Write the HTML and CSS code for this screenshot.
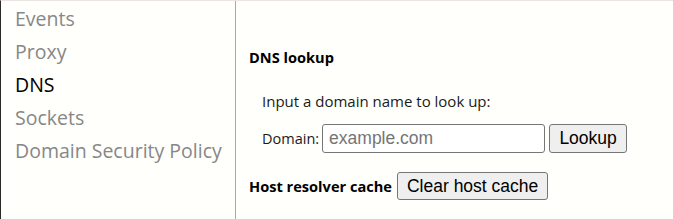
FILE: index.html
```html
<!DOCTYPE html>
<html>
<head>
<meta http-equiv="Content-Type" content="text/html; charset=utf-8" />
<title>net-internals</title>
<link rel="stylesheet" href="styles.css">
</head>
<body>

<div class="page">

	<ul class="tabs">
		<li>Events</li>
		<li>Proxy</li>
		<li class="selected">DNS</li>
		<li>Sockets</li>
		<li>Domain Security Policy</li>
	</ul>

	<div class="content">
		<h4>DNS lookup</h4>

		<div class="indent">
			<p>Input a domain name to look up:</p>

			<form class="lookup" onsubmit="return false">
				<label for="dnsName">Domain:</label>
				<input type="text" id="dnsName" placeholder="example.com" />
				<button type="submit">Lookup</button>
			</form>
		</div>

		<div class="cache">
			<h4>Host resolver cache</h4>
			<button type="button">Clear host cache</button>
		</div>
	</div>

</div>

</body>
</html>
```

FILE: styles.css
```css
html, body {
	margin: 0;
	height: 100%;
	background: #fffffb;
}

.page {
	display: flex;
	height: 100%;
	box-sizing: border-box;
	border-top: 1px solid #ebe4e2;
	border-left: 1px solid #2a2a2a;
	font-family: "Open Sans", "Liberation Sans", sans-serif;
}

.tabs {
	width: 235px;
	flex: none;
	margin: 0;
	padding: 1px 0 0 14px;
	box-sizing: border-box;
	list-style: none;
	border-right: 1px solid #a9a9a9;
}

.tabs li {
	font-size: 19.5px;
	line-height: 33px;
	color: #878787;
	white-space: nowrap;
}

.tabs li.selected {
	color: #000;
}

.content {
	padding: 46px 0 0 13px;
	font-size: 15px;
	color: #1a1a1a;
}

h4 {
	margin: 0;
	font-size: 14.6px;
	line-height: 20px;
	font-weight: bold;
	color: #000;
	white-space: nowrap;
}

.indent {
	padding-left: 13px;
}

.indent p {
	margin: 24px 0 13px 0;
	line-height: 20px;
}

.lookup {
	display: flex;
	align-items: center;
	gap: 3px;
	margin: 0;
}

.lookup label {
	font-size: 14.5px;
	margin-right: 0;
}

input[type=text] {
	width: 223px;
	height: 29px;
	box-sizing: border-box;
	border: 1px solid #767676;
	border-radius: 3px;
	padding: 0 6px;
	font-family: "Liberation Sans", Arial, sans-serif;
	font-size: 17.5px;
	background: #fff;
}

input[type=text]::placeholder {
	color: #757575;
}

button {
	height: 29px;
	box-sizing: border-box;
	padding: 0 9px;
	border: 1px solid #767676;
	border-radius: 3px;
	background: #efefef;
	font-family: "Liberation Sans", Arial, sans-serif;
	font-size: 17.5px;
	color: #000;
	white-space: nowrap;
	cursor: pointer;
}

.lookup button {
	width: 78px;
	margin-left: 1px;
}

.cache {
	display: flex;
	align-items: center;
	gap: 5px;
	margin-top: 19px;
}

.cache button {
	height: 28px;
}
```
